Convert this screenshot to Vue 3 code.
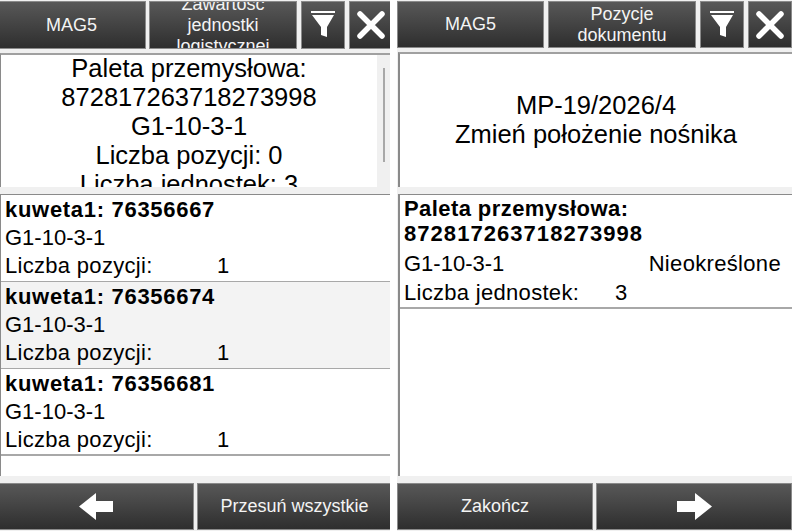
<script setup>
const items = ['76356667', '76356674', '76356681']
</script>

<template>
  <div class="screen">
    <section class="pane left">
      <header class="bar top">
        <button class="btn first">MAG5</button>
        <button class="btn wide"><span>Zawartość jednostki logistycznej</span></button>
        <button class="btn sq funnel">
          <svg width="24" height="26" viewBox="0 0 24 26"><path d="M0 0h24v2H0zM1 4h22L16 16v10l-6-2v-8z" fill="#fff"/></svg>
        </button>
        <button class="btn sq close">
          <svg width="28" height="28" viewBox="0 0 28 28"><path d="M3 3l22 22M25 3L3 25" stroke="#fff" stroke-width="5.5" stroke-linecap="round"/></svg>
        </button>
      </header>
      <div class="info scrolled">
        <div class="info-text">
          <div>Paleta przemysłowa:</div>
          <div>872817263718273998</div>
          <div>G1-10-3-1</div>
          <div>Liczba pozycji: 0</div>
          <div>Liczba jednostek: 3</div>
        </div>
        <div class="track"><div class="thumb"></div></div>
      </div>
      <div class="list">
        <div v-for="(it, i) in items" :key="it" class="row" :class="{ alt: i === 1 }">
          <div class="b kuweta">kuweta1: {{ it }}</div>
          <div>G1-10-3-1</div>
          <div class="kv"><span class="k">Liczba pozycji:</span><span>1</span></div>
        </div>
      </div>
      <footer class="bar bottom">
        <button class="btn f1">
          <svg width="34" height="27" viewBox="0 0 34 27"><path d="M0 13.5L17 0v8h17v11H17v8z" fill="#fff"/></svg>
        </button>
        <button class="btn f2">Przesuń wszystkie</button>
      </footer>
    </section>
    <section class="pane right">
      <header class="bar top">
        <button class="btn wide first">MAG5</button>
        <button class="btn wide"><span>Pozycje dokumentu</span></button>
        <button class="btn sq funnel">
          <svg width="24" height="26" viewBox="0 0 24 26"><path d="M0 0h24v2H0zM1 4h22L16 16v10l-6-2v-8z" fill="#fff"/></svg>
        </button>
        <button class="btn sq close">
          <svg width="28" height="28" viewBox="0 0 28 28"><path d="M3 3l22 22M25 3L3 25" stroke="#fff" stroke-width="5.5" stroke-linecap="round"/></svg>
        </button>
      </header>
      <div class="info center">
        <div>MP-19/2026/4</div>
        <div>Zmień położenie nośnika</div>
      </div>
      <div class="list">
        <div class="row">
          <div class="b tight paleta">Paleta przemysłowa:</div>
          <div class="b tight number">872817263718273998</div>
          <div class="between"><span>G1-10-3-1</span><span class="wider">Nieokreślone</span></div>
          <div class="kv"><span class="k">Liczba jednostek:</span><span>3</span></div>
        </div>
      </div>
      <footer class="bar bottom">
        <button class="btn f1">Zakończ</button>
        <button class="btn f2">
          <svg width="35" height="27" viewBox="0 0 35 27"><path d="M35 13.5L18 0v8H0v11h18v8z" fill="#fff"/></svg>
        </button>
      </footer>
    </section>
  </div>
</template>

<style>
html, body { margin: 0; background: #fff; }
</style>

<style scoped>
.screen {
  width: 792px;
  height: 531px;
  display: flex;
  gap: 7px;
  overflow: hidden;
  font-family: "Liberation Sans", Arial, sans-serif;
  color: #000;
  background: #fff;
}
.pane {
  display: flex;
  flex-direction: column;
  background: #f0f0f0;
  overflow: hidden;
  box-sizing: border-box;
  padding-bottom: 1px;
}
.left { width: 390px; }
.right { width: 395px; }
.bar { display: flex; gap: 3px; flex: none; }
.left .bar { margin-left: -3px; margin-right: -2px; }
.top { height: 48px; margin-top: 1px; }
.right .top { height: 47px; gap: 4px; }
.bottom { height: 47px; margin-top: 7px; }
.btn {
  box-sizing: border-box;
  height: 100%;
  padding: 0 6px;
  border: 1px solid #8a8a8a;
  background: linear-gradient(#585858, #2e2e2e);
  color: #f4f4f4;
  font: 18px/21px "Liberation Sans", Arial, sans-serif;
  display: flex;
  align-items: center;
  justify-content: center;
  overflow: hidden;
  text-align: center;
  flex: none;
}
.left .first { width: 149px; }
.wide { width: 148px; }
.right .first { width: 147px; }
.sq { width: 44px; padding: 0; }
.left .sq { margin-left: 1px; }
.left .close { width: 43px; }
.funnel svg { margin-bottom: 2px; }
.f1 { width: 197px; }
.right .f1 { width: 196px; }
.right .bottom { gap: 3px; }
.f2 { flex: 1; }
.info {
  box-sizing: border-box;
  flex: none;
  height: 134px;
  margin-top: 4px;
  background: #fff;
  border-top: 2px solid #a0a0a0;
  border-left: 1px solid #8a8a8a;
  font-size: 25.5px;
  line-height: 29px;
  text-align: center;
}
.scrolled { display: flex; }
.info-text { flex: 1; min-width: 0; margin-top: -1px; overflow: hidden; }
.track {
  width: 13px;
  flex: none;
  background: #f0f0f0;
  display: flex;
  justify-content: center;
  padding-top: 13px;
  box-sizing: border-box;
}
.thumb { width: 2px; height: 94px; background: #a8a8a8; }
.center {
  height: 135px;
  margin-left: 1px;
  padding-bottom: 2px;
  display: flex;
  flex-direction: column;
  justify-content: center;
  border-left-width: 2px;
}
.list {
  box-sizing: border-box;
  flex: 1;
  margin-top: 7px;
  background: #fff;
  border-top: 1px solid #8a8a8a;
  border-left: 1px solid #8a8a8a;
  font-size: 22px;
  line-height: 28px;
}
.right .list { border-left-width: 2px; margin-left: 1px; padding-top: 1px; line-height: 29px; }
.row {
  box-sizing: border-box;
  padding: 1px 0 0 4px;
  border-bottom: 1px solid #a8a8a8;
  height: 87px;
}
.row:last-child { border-bottom: 2px solid #a8a8a8; }
.right .row { height: auto; padding: 0 0 0 4px; }
.alt { background: #f3f3f3; }
.b { font-weight: 700; }
.kuweta { letter-spacing: 0.7px; }
.tight { line-height: 25px; }
.paleta { letter-spacing: 0.42px; }
.number { letter-spacing: 1.05px; margin-bottom: 3px; }
.kv { display: flex; }
.k { width: 212px; letter-spacing: 0.3px; }
.wider { letter-spacing: 0.33px; }
.right .k { width: 211px; }
.between { display: flex; justify-content: space-between; padding-right: 11px; }
</style>
